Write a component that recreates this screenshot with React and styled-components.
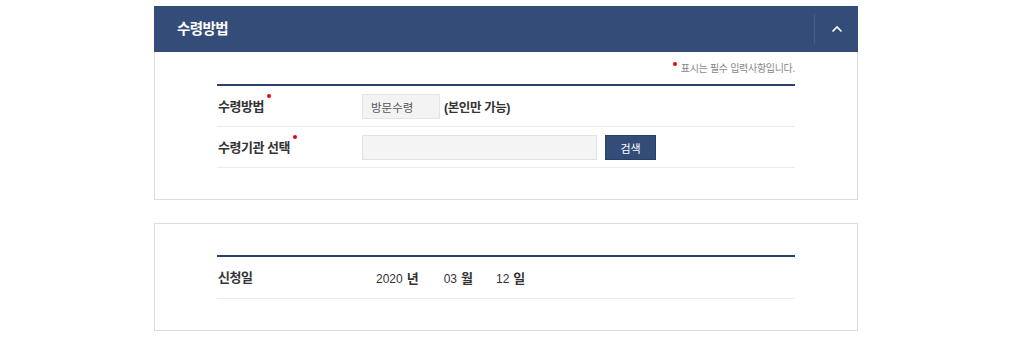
import React from "react";
import styled, { createGlobalStyle } from "styled-components";

const Global = createGlobalStyle`
  html, body { margin: 0; padding: 0; background: #fff; }
  body { font-family: "Liberation Sans", "Noto Sans CJK KR", sans-serif; color: #333; }
  * { box-sizing: border-box; }
`;

const Page = styled.div`
  width: 704px;
  margin-left: 154px;
  padding-top: 6px;
  display: flex;
  flex-direction: column;
  gap: 23px;
`;

const Panel = styled.section`
  border: 1px solid #dcdcdc;
  border-top: ${(p) => (p.$flat ? "1px solid #dcdcdc" : "none")};
  background: #fff;
`;

const Header = styled.div`
  height: 46px;
  margin: 0 -1px;
  background: #344d78;
  display: flex;
  align-items: center;
  justify-content: space-between;
  padding-left: 23px;
`;

const Title = styled.h2`
  margin: 0;
  font-size: 14.5px;
  font-weight: 700;
  color: #fff;
  letter-spacing: -0.6px;
  line-height: 20px;
`;

const Toggle = styled.button`
  width: 44px;
  height: 30px;
  border: none;
  border-left: 1px solid rgba(255, 255, 255, 0.1);
  background: transparent;
  display: flex;
  align-items: center;
  justify-content: center;
  padding: 0;
  cursor: pointer;
`;

const Body = styled.div`
  padding: ${(p) => p.$top}px 62px 31px 62px;
`;

const Note = styled.p`
  margin: 0 0 7px;
  text-align: right;
  font-size: 10px;
  color: #888;
  line-height: 16px;
  letter-spacing: -0.3px;
`;

const Dot = styled.span`
  display: inline-block;
  width: 4px;
  height: 4px;
  border-radius: 50%;
  background: #e50012;
  vertical-align: top;
  margin: ${(p) => p.$m || "0"};
`;

const Table = styled.div`
  border-top: 2px solid #2b416d;
`;

const Row = styled.div`
  display: grid;
  grid-template-columns: 145px 1fr;
  align-items: center;
  border-bottom: 1px solid #ebebeb;
  padding: ${(p) => p.$pad || "8px 0 7px"};
`;

const Label = styled.div`
  font-size: 13px;
  font-weight: 700;
  color: #333;
  line-height: 18px;
  padding-left: 1px;
  letter-spacing: -0.5px;
`;

const Value = styled.div`
  display: flex;
  align-items: center;
  gap: ${(p) => p.$gap || "4px"};
`;

const ReadBox = styled.div`
  width: 78px;
  height: 25px;
  background: #f3f3f3;
  border: 1px solid #e4e4e4;
  font-size: 11.5px;
  color: #555;
  display: flex;
  align-items: center;
  padding-left: 8px;
`;

const Strong = styled.span`
  font-size: 12.5px;
  font-weight: 700;
  color: #333;
  letter-spacing: -0.4px;
`;

const Input = styled.input`
  width: 235px;
  height: 25px;
  background: #f4f4f4;
  border: 1px solid #e2e2e2;
  margin: 0;
  padding: 0 8px;
  outline: none;
`;

const SearchButton = styled.button`
  width: 51px;
  height: 25px;
  margin-left: 4px;
  background: #344d78;
  border: 1px solid #2a3f66;
  color: #fff;
  font-family: inherit;
  font-size: 11px;
  padding: 0;
`;

const DatePart = styled.span`
  display: inline-flex;
  align-items: baseline;
  gap: 4px;
  margin-left: ${(p) => p.$ml || 0}px;
  font-size: 12px;
  color: #333;
`;

const Unit = styled.b`
  font-size: 13px;
  font-weight: 700;
`;

export default function App() {
  return (
    <>
      <Global />
      <Page>
        <Panel>
          <Header>
            <Title>수령방법</Title>
            <Toggle aria-label="접기">
              <svg width="12" height="8" viewBox="0 0 12 8">
                <polyline points="1.5,6.5 6,2 10.5,6.5" fill="none" stroke="#fff" strokeWidth="1.6" />
              </svg>
            </Toggle>
          </Header>
          <Body $top={9}>
            <Note>
              <Dot $m="1px 4px 0 0" />표시는 필수 입력사항입니다.
            </Note>
            <Table>
              <Row>
                <Label>
                  수령방법<Dot $m="-4px 0 0 3px" />
                </Label>
                <Value>
                  <ReadBox>방문수령</ReadBox>
                  <Strong>(본인만 가능)</Strong>
                </Value>
              </Row>
              <Row>
                <Label>
                  수령기관 선택<Dot $m="-4px 0 0 3px" />
                </Label>
                <Value>
                  <Input type="text" />
                  <SearchButton>검색</SearchButton>
                </Value>
              </Row>
            </Table>
          </Body>
        </Panel>
        <Panel $flat>
          <Body $top={31}>
            <Table>
              <Row $pad="11px 0">
                <Label>신청일</Label>
                <Value $gap="0">
                  <DatePart $ml={14}>2020<Unit>년</Unit></DatePart>
                  <DatePart $ml={25}>03<Unit>월</Unit></DatePart>
                  <DatePart $ml={23}>12<Unit>일</Unit></DatePart>
                </Value>
              </Row>
            </Table>
          </Body>
        </Panel>
      </Page>
    </>
  );
}
